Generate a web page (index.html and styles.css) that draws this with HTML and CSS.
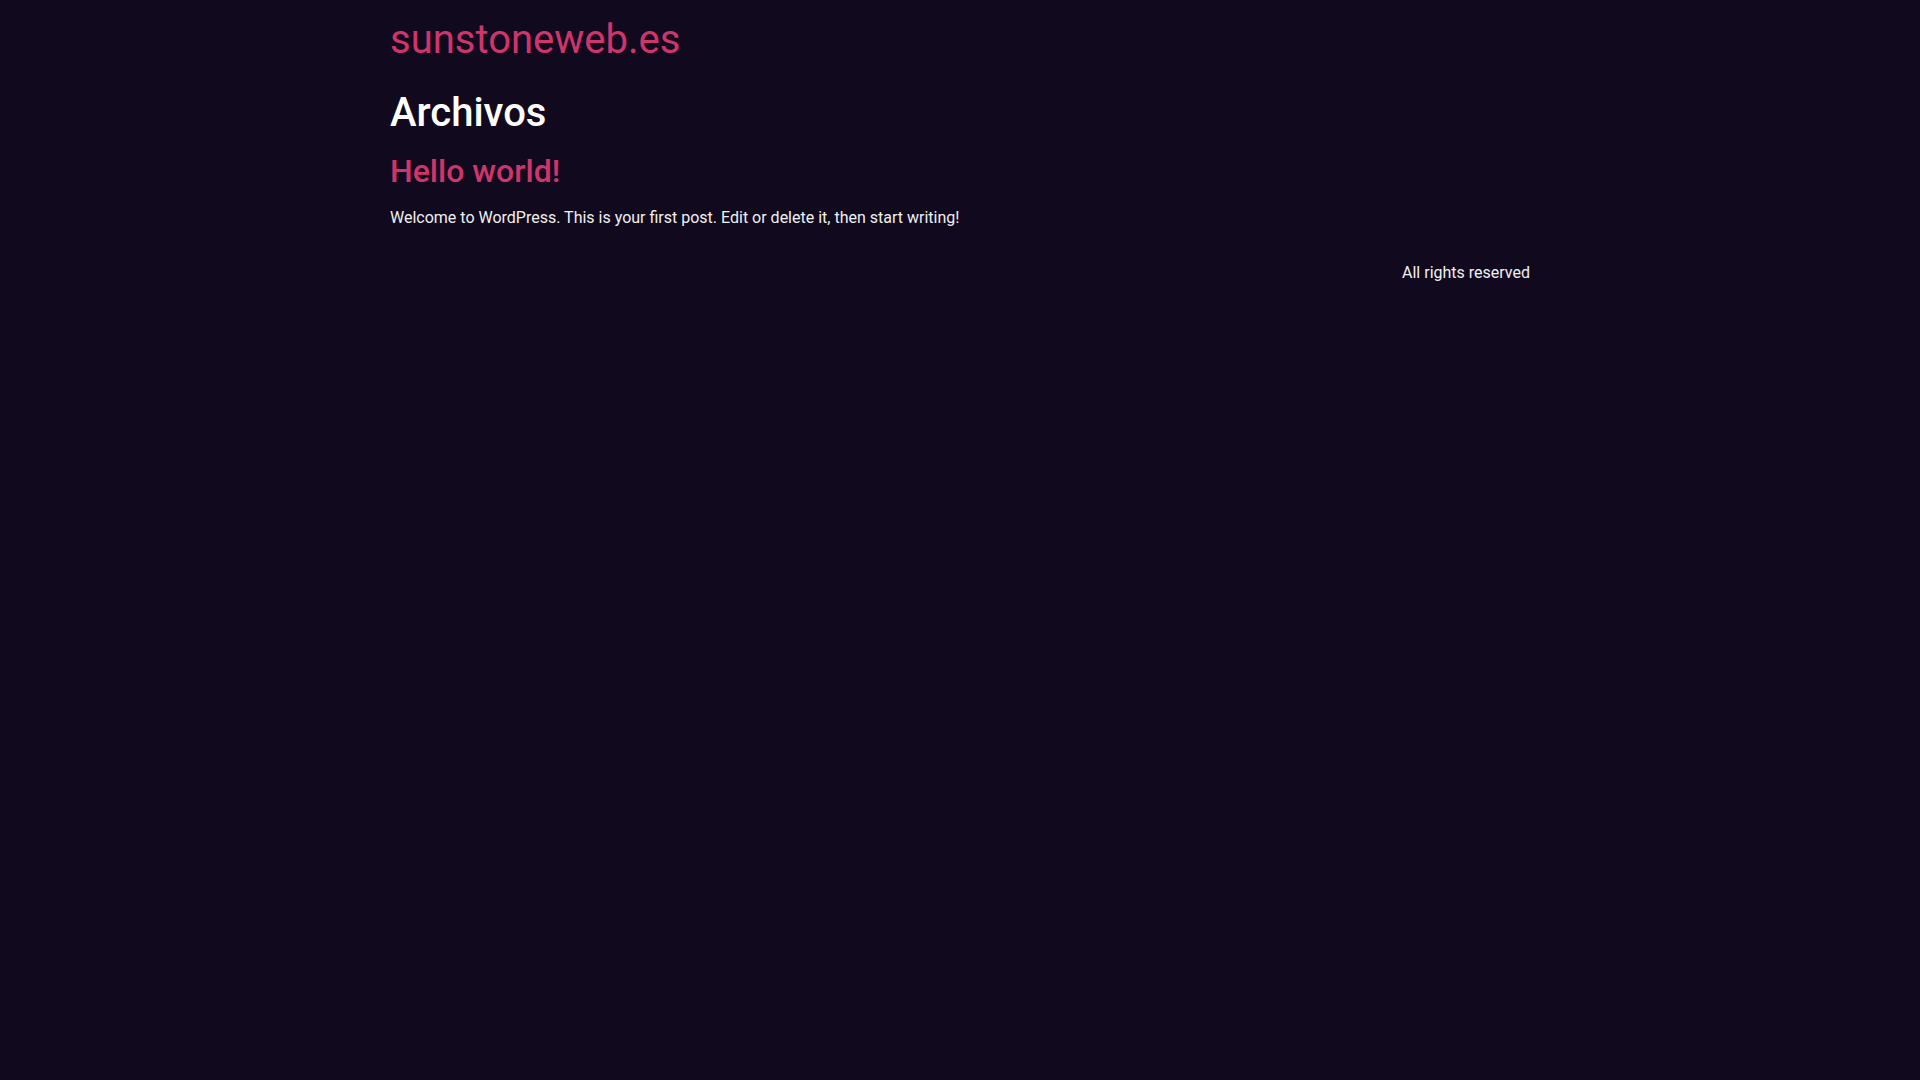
FILE: index.html
```html
<!DOCTYPE html>
<html lang="es">
<head>
<meta charset="utf-8">
<title>Archivos - sunstoneweb.es</title>
<link rel="stylesheet" href="styles.css">
</head>
<body>
<div class="container">
  <header class="site-header">
    <a class="site-title" href="#">sunstoneweb.es</a>
  </header>
  <main class="site-main">
    <h1 class="page-title">Archivos</h1>
    <article class="post">
      <h2 class="entry-title"><a href="#">Hello world!</a></h2>
      <p class="entry-summary">Welcome to WordPress. This is your first post. Edit or delete it, then start writing!</p>
    </article>
  </main>
  <footer class="site-footer">
    <p class="copyright">All rights reserved</p>
  </footer>
</div>
</body>
</html>
```
FILE: styles.css
```css
html, body {
  margin: 0;
  padding: 0;
  background: #110a1f;
  color: #ffffff;
  font-family: Roboto, "Liberation Sans", sans-serif;
  font-size: 16px;
  line-height: 1.5;
}
.container {
  width: 1140px;
  margin: 0 auto;
}
.site-header {
  padding-top: 16px;
}
.site-title {
  color: #cf346b;
  text-decoration: none;
  font-size: 40px;
  font-weight: 400;
  line-height: 1.2;
}
.page-title {
  margin: 25px 0 0;
  font-size: 40px;
  font-weight: 500;
  line-height: 1.2;
}
.entry-title {
  margin: 15px 0 0;
  font-size: 32px;
  font-weight: 500;
  line-height: 1.2;
}
.entry-title a {
  color: #cf346b;
  text-decoration: none;
}
.entry-summary {
  margin: 16px 0 0;
  color: #f0f0f0;
}
.site-footer {
  display: flex;
  justify-content: flex-end;
  margin-top: 31px;
}
.copyright {
  margin: 0;
  color: #f0f0f0;
}
```
